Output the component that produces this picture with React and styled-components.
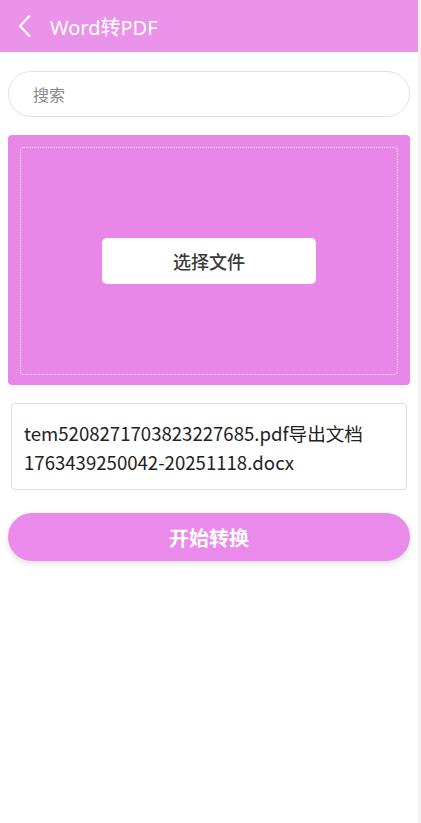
import React from "react";
import styled, { createGlobalStyle } from "styled-components";

const GlobalStyle = createGlobalStyle`
  html, body {
    margin: 0;
    padding: 0;
    background: #f1f1f1;
  }
  body {
    font-family: "Noto Sans", "Noto Sans CJK SC", sans-serif;
  }
`;

const Page = styled.div`
  width: 418px;
  min-height: 823px;
  background: #fff;
  box-sizing: border-box;
`;

const Header = styled.header`
  height: 52px;
  background: #eb93eb;
  display: flex;
  align-items: center;
  padding-left: 17px;
  gap: 18px;
  color: #fff;
`;

const Title = styled.h1`
  margin: 0;
  font-size: 20px;
  font-weight: 400;
  font-family: "Noto Sans", "Noto Sans CJK SC", sans-serif;
`;

const Content = styled.main`
  padding: 19px 8px 0;
  display: flex;
  flex-direction: column;
`;

const Search = styled.input`
  height: 46px;
  border: 1px solid #e2e2e2;
  border-radius: 23px;
  padding: 0 24px;
  font-size: 16px;
  font-family: "Noto Sans CJK SC", sans-serif;
  outline: none;
  box-sizing: border-box;
  &::placeholder {
    color: #888;
  }
`;

const DropZone = styled.section`
  margin-top: 18px;
  height: 250px;
  background: #e887e8;
  border-radius: 4px;
  padding: 12px;
  box-sizing: border-box;
`;

const DashedArea = styled.div`
  height: 100%;
  border: 1px dotted rgba(255, 255, 255, 0.95);
  border-radius: 4px;
  display: flex;
  align-items: center;
  justify-content: center;
`;

const PickButton = styled.button`
  width: 214px;
  height: 46px;
  border: none;
  border-radius: 5px;
  background: #fff;
  color: #3a3a3a;
  font-size: 18px;
  font-weight: 500;
  font-family: "Noto Sans CJK SC", sans-serif;
  cursor: pointer;
`;

const FileBox = styled.div`
  margin: 18px 3px 0;
  border: 1px solid #dcdcdc;
  border-radius: 4px;
  padding: 14px 12px 13px;
  font-size: 18.6px;
  line-height: 29px;
  color: #222;
  font-family: "Noto Sans CJK SC", sans-serif;
`;

const StartButton = styled.button`
  margin-top: 23px;
  height: 48px;
  border: none;
  border-radius: 24px;
  background: #ea8aea;
  color: #fff;
  font-size: 20px;
  font-weight: 700;
  font-family: "Noto Sans CJK SC", sans-serif;
  box-shadow: 0 3px 6px rgba(0, 0, 0, 0.12);
  cursor: pointer;
`;

function BackIcon() {
  return (
    <svg width="15" height="26" viewBox="0 0 15 26" fill="none">
      <path d="M12.5 3 L3 13 L12.5 23" stroke="#fff" strokeWidth="2" strokeLinecap="round" strokeLinejoin="round" />
    </svg>
  );
}

export default function App() {
  return (
    <>
      <GlobalStyle />
      <Page>
        <Header>
          <BackIcon />
          <Title>Word转PDF</Title>
        </Header>
        <Content>
          <Search placeholder="搜索" />
          <DropZone>
            <DashedArea>
              <PickButton>选择文件</PickButton>
            </DashedArea>
          </DropZone>
          <FileBox>
            tem5208271703823227685.pdf导出文档1763439250042-20251118.docx
          </FileBox>
          <StartButton>开始转换</StartButton>
        </Content>
      </Page>
    </>
  );
}
